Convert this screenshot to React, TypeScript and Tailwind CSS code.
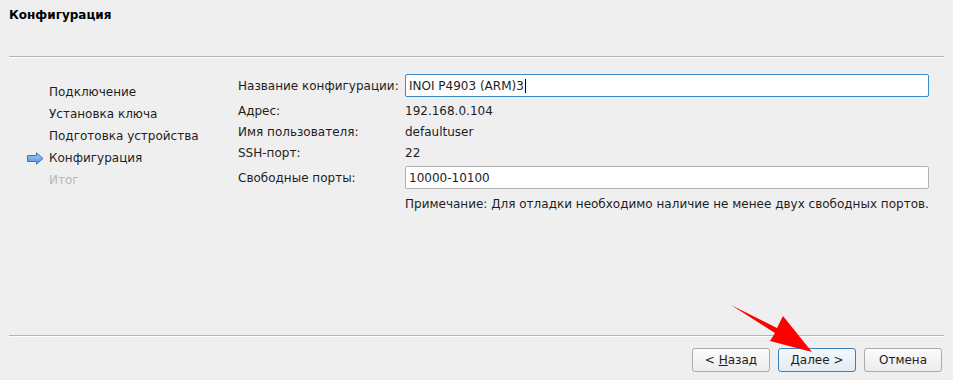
import React from "react";

const steps = [
  { label: "Подключение", state: "done" },
  { label: "Установка ключа", state: "done" },
  { label: "Подготовка устройства", state: "done" },
  { label: "Конфигурация", state: "current" },
  { label: "Итог", state: "todo" },
];

function StepArrow() {
  return (
    <svg width="17" height="13" viewBox="0 0 17 13">
      <defs>
        <linearGradient id="sa" x1="0" y1="0" x2="0" y2="1">
          <stop offset="0" stopColor="#a9cdf3" />
          <stop offset="1" stopColor="#4d8fdc" />
        </linearGradient>
      </defs>
      <path
        d="M0.5 3.5 H9.5 V0.8 L16 6.5 L9.5 12.2 V9.5 H0.5 Z"
        fill="url(#sa)"
        stroke="#3f74b8"
        strokeWidth="1"
        strokeLinejoin="round"
      />
    </svg>
  );
}

function Separator() {
  return <div className="mx-[9px] border-t border-b border-t-[#b4b4b4] border-b-white" />;
}

function Button({
  children,
  primary,
}: {
  children: React.ReactNode;
  primary?: boolean;
}) {
  return (
    <button
      className={
        "h-[24px] w-[78px] rounded-[3px] border text-[12px] text-[#1e1e1e] " +
        (primary
          ? "border-[#3d80b5] bg-gradient-to-b from-[#f4f8fc] to-[#e3ebf3]"
          : "border-[#ababab] bg-gradient-to-b from-[#fbfbfb] to-[#ececec]")
      }
    >
      {children}
    </button>
  );
}

export default function App() {
  return (
    <div
      className="relative flex h-[380px] w-[953px] flex-col bg-[#efefef] text-[12px] text-[#1e1e1e]"
      style={{ fontFamily: '"DejaVu Sans", sans-serif' }}
    >
      {/* заголовок */}
      <div className="h-[56px] px-[9px] pt-[8px] font-bold leading-[14px] text-black">
        Конфигурация
      </div>
      <Separator />

      {/* содержимое */}
      <div className="flex flex-1 pt-[16px]">
        <div className="w-[238px] pt-[7px]">
          {steps.map((s) => (
            <div key={s.label} className="flex h-[22px] items-center">
              <div className="flex w-[49px] justify-end pr-[5px]">
                {s.state === "current" && <StepArrow />}
              </div>
              <span className={s.state === "todo" ? "text-[#b8b8b8]" : ""}>
                {s.label}
              </span>
            </div>
          ))}
        </div>

        <div className="flex flex-1 flex-col pr-[24px]">
          <div className="flex h-[23px] items-center">
            <span className="w-[167px]">Название конфигурации:</span>
            <div className="flex h-[23px] flex-1 items-center rounded-[2px] border border-[#3a8cc8] bg-white pl-[3px]">
              INOI P4903 (ARM)3
              <span className="ml-[1px] h-[14px] w-px bg-black" />
            </div>
          </div>
          <div className="mt-[3px] flex h-[21px] items-center">
            <span className="w-[167px]">Адрес:</span>
            <span>192.168.0.104</span>
          </div>
          <div className="flex h-[21px] items-center">
            <span className="w-[167px]">Имя пользователя:</span>
            <span>defaultuser</span>
          </div>
          <div className="flex h-[21px] items-center">
            <span className="w-[167px]">SSH-порт:</span>
            <span>22</span>
          </div>
          <div className="mt-[3px] flex h-[23px] items-center">
            <span className="w-[167px]">Свободные порты:</span>
            <div className="flex h-[23px] flex-1 items-center rounded-[2px] border border-[#b2b2b2] bg-white pl-[3px]">
              10000-10100
            </div>
          </div>
          <div className="mt-[4px] flex h-[21px] items-center pl-[167px]">
            Примечание: Для отладки необходимо наличие не менее двух свободных портов.
          </div>
        </div>
      </div>

      <Separator />
      {/* кнопки */}
      <div className="flex h-[43px] items-start justify-end gap-[8px] pr-[11px] pt-[11px]">
        <Button>
          &lt; <span className="underline">Н</span>азад
        </Button>
        <Button primary>
          <span className="underline">Д</span>алее &gt;
        </Button>
        <Button>Отмена</Button>
      </div>

      {/* красная стрелка поверх */}
      <svg
        className="pointer-events-none absolute left-0 top-0"
        width="953"
        height="380"
      >
        <path
          d="M731 305 L777 328 L783 316 L812 352 L770 341 L775 333 Z"
          fill="#ff0000"
        />
      </svg>
    </div>
  );
}
